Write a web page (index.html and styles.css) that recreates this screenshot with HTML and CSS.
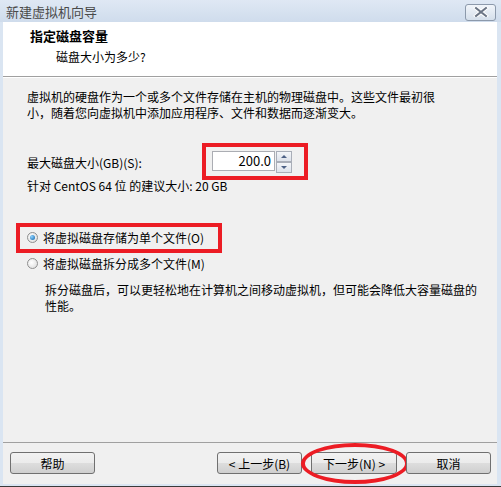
FILE: index.html
```html
<!DOCTYPE html>
<html>
<head>
    <title>新建虚拟机向导</title>
    <link rel="stylesheet" href="styles.css">
</head>
<body>
    <div id="window">
        <div class="title-bar">
            <span class="title-text">新建虚拟机向导</span>
            <div class="close-btn">
                <svg width="16" height="10" viewBox="0 0 16 10">
                    <path d="M3 1 L13 9 M13 1 L3 9" stroke="#fff" stroke-width="4" stroke-linecap="square"/>
                    <path d="M3 1 L13 9 M13 1 L3 9" stroke="#6b7585" stroke-width="2" stroke-linecap="square"/>
                </svg>
            </div>
        </div>
        <div class="frame">
            <div class="header">
                <div class="header-title">指定磁盘容量</div>
                <div class="header-sub">磁盘大小为多少?</div>
            </div>
            <div class="content">
                <p class="intro">虚拟机的硬盘作为一个或多个文件存储在主机的物理磁盘中。这些文件最初很<br>小，随着您向虚拟机中添加应用程序、文件和数据而逐渐变大。</p>

                <div class="size-row">
                    <span class="size-label">最大磁盘大小(GB)(S):</span>
                    <div class="spin-wrap">
                        <div class="spin-input">200.0</div>
                        <div class="spin-buttons">
                            <div class="spin-btn"><span class="arrow-up"></span></div>
                            <div class="spin-btn"><span class="arrow-down"></span></div>
                        </div>
                        <div class="mark-box spin-mark"></div>
                    </div>
                </div>
                <div class="hint">针对 CentOS 64 位 的建议大小: 20 GB</div>

                <div class="options">
                    <div class="option">
                        <span class="radio checked"></span>
                        <span>将虚拟磁盘存储为单个文件(O)</span>
                        <div class="mark-box option-mark"></div>
                    </div>
                    <div class="option">
                        <span class="radio"></span>
                        <span>将虚拟磁盘拆分成多个文件(M)</span>
                    </div>
                    <p class="option-desc">拆分磁盘后，可以更轻松地在计算机之间移动虚拟机，但可能会降低大容量磁盘的<br>性能。</p>
                </div>
            </div>
            <div class="footer">
                <div class="button">帮助</div>
                <div class="nav-buttons">
                    <div class="button">&lt; 上一步(B)</div>
                    <div class="button next">下一步(N) &gt;
                        <div class="mark-ellipse"></div>
                    </div>
                    <div class="button">取消</div>
                </div>
            </div>
        </div>
    </div>
</body>
</html>
```

FILE: styles.css
```css
body {
    margin: 0;
    font-family: "Noto Sans CJK SC", "Noto Sans", sans-serif;
    font-size: 12px;
    color: #000;
    background-color: #fff;
}

#window {
    width: 501px;
    height: 487px;
    display: flex;
    flex-direction: column;
    background-color: #dae5f2;
    border-bottom: 1px solid #3a3a3a;
    box-sizing: border-box;
}

.title-bar {
    height: 22px;
    display: flex;
    align-items: center;
    justify-content: space-between;
    padding: 0 5px 0 6px;
    background: linear-gradient(#dfe8f4, #cfdcec);
}

.title-text {
    font-size: 13px;
    color: #4a4a4a;
}

.close-btn {
    width: 29px;
    height: 15px;
    margin-top: 2px;
    border: 1px solid #8c99ab;
    border-radius: 3px;
    background: linear-gradient(#f1f5fa, #d5dfeb);
    display: flex;
    align-items: center;
    justify-content: center;
}

.frame {
    flex: 1;
    margin: 0 4px 2px 3px;
    background-color: #f0f0f0;
    display: flex;
    flex-direction: column;
}

.header {
    height: 55px;
    background-color: #fff;
    border-bottom: 1px solid #a0a0a0;
    box-shadow: 0 1px 0 #fff;
    padding: 5px 0 0 27px;
    box-sizing: border-box;
}

.header-title {
    font-weight: bold;
    font-size: 13px;
    line-height: 17px;
}

.header-sub {
    padding-left: 26px;
    line-height: 18px;
    margin-top: 4px;
}

.content {
    flex: 1;
    padding: 0 0 0 24px;
    position: relative;
}

.intro {
    margin: 12px 0 0 0;
    line-height: 16px;
}

.size-row {
    display: flex;
    align-items: center;
    margin-top: 30px;
}

.size-label {
    width: 185px;
}

.spin-wrap {
    display: flex;
    position: relative;
}

.spin-input {
    width: 58px;
    height: 18px;
    border: 1px solid #abadb3;
    background-color: #fff;
    text-align: right;
    line-height: 18px;
    padding-right: 3px;
    font-size: 13px;
}

.spin-buttons {
    display: flex;
    flex-direction: column;
    margin-left: 1px;
}

.spin-btn {
    width: 14px;
    height: 9px;
    border: 1px solid #a9aeb8;
    background: linear-gradient(#f4f6f9, #dde2ea);
    display: flex;
    align-items: center;
    justify-content: center;
}

.arrow-up {
    border-left: 3px solid transparent;
    border-right: 3px solid transparent;
    border-bottom: 3px solid #4d6185;
}

.arrow-down {
    border-left: 3px solid transparent;
    border-right: 3px solid transparent;
    border-top: 3px solid #4d6185;
}

.mark-box {
    position: absolute;
    border: 4px solid #ec1c24;
}

.spin-mark {
    left: -10px;
    top: -8px;
    width: 98px;
    height: 29px;
}

.hint {
    margin-top: 5px;
    line-height: 16px;
}

.options {
    margin-top: 29px;
}

.option {
    display: flex;
    align-items: center;
    height: 29px;
    position: relative;
}

.option + .option {
    height: 18px;
    margin-top: 2px;
}

.radio {
    width: 11px;
    height: 11px;
    border-radius: 50%;
    border: 1px solid #8f8f8f;
    background: radial-gradient(circle at 40% 40%, #ffffff, #d8d8d8);
    margin-right: 5px;
    box-sizing: border-box;
    position: relative;
}

.radio.checked::after {
    content: "";
    position: absolute;
    left: 2px;
    top: 2px;
    width: 5px;
    height: 5px;
    border-radius: 50%;
    background: radial-gradient(circle at 35% 35%, #8fd3ff, #0a5fa8);
}

.option-mark {
    left: -11px;
    top: 0;
    width: 198px;
    height: 22px;
}

.option-desc {
    margin: 10px 0 0 18px;
    line-height: 16px;
}

.footer {
    height: 42px;
    border-top: 1px solid #a0a0a0;
    display: flex;
    align-items: flex-start;
    justify-content: space-between;
    padding: 9px 6px 0 7px;
    box-sizing: border-box;
}

.nav-buttons {
    display: flex;
    gap: 9px;
}

.button {
    width: 85px;
    height: 22px;
    box-sizing: border-box;
    border: 1px solid #707070;
    border-radius: 3px;
    background: linear-gradient(#f2f2f2 0%, #ebebeb 50%, #dddddd 51%, #cfcfcf 100%);
    display: flex;
    align-items: center;
    justify-content: center;
    position: relative;
}

.next {
    width: 86px;
}

.mark-ellipse {
    position: absolute;
    left: -11px;
    top: -10px;
    width: 100px;
    height: 33px;
    border: 4px solid #ec1c24;
    border-radius: 50%;
}
```
